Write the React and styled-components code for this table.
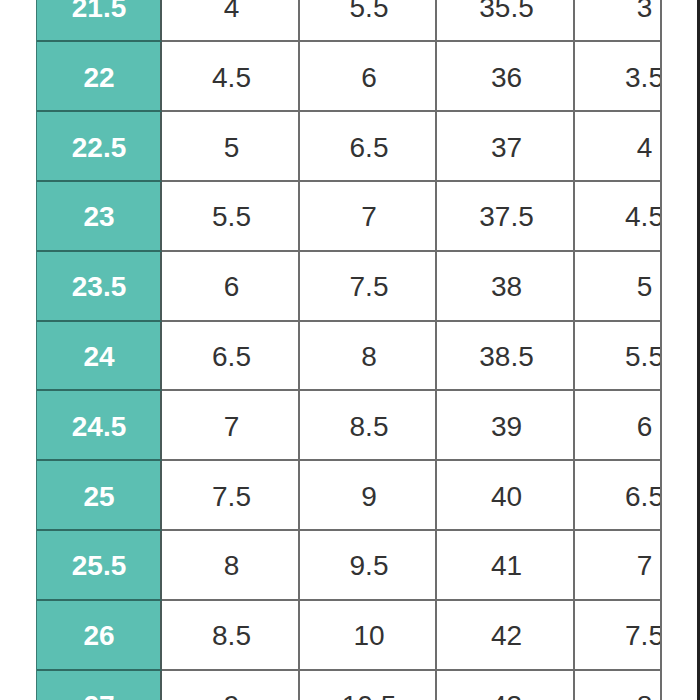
import React from "react";
import styled, { createGlobalStyle } from "styled-components";

const GlobalStyle = createGlobalStyle`
  html, body {
    margin: 0;
    padding: 0;
    background: #ffffff;
  }
  body {
    font-family: "Liberation Sans", Arial, Helvetica, sans-serif;
  }
`;

// the screenshot is a crop of a bigger size chart
const Page = styled.div`
  width: 700px;
  height: 700px;
  overflow: hidden;
  background: #fff;
  display: flex;
  border-right: 3px solid #222;
  box-sizing: border-box;
`;

const Chart = styled.div`
  margin-left: 36px;
  margin-top: -27.4px;
  width: 626px;
  overflow: hidden;
  border-left: 1px solid #3b7a72;
  border-right: 2px solid #6d6d6d;
  box-sizing: border-box;
  align-self: flex-start;
`;

const Row = styled.div`
  display: grid;
  grid-template-columns: 125px 138px 137px 138px 138px;
  height: 69.8px;
`;

const Cell = styled.div`
  display: flex;
  align-items: center;
  justify-content: center;
  box-sizing: border-box;
  padding: 3px 0 0 3px;
  border-bottom: 2px solid #6d6d6d;
  border-right: 2px solid #6d6d6d;
  font-size: 28px;
  color: #333333;
  background: #ffffff;
  white-space: nowrap;
`;

const HeadCell = styled(Cell)`
  padding-left: 1px;
  background: #5cbfb2;
  color: #ffffff;
  font-weight: 700;
  border-bottom-color: #2f6b63;
  border-right-color: #4a5a58;
`;

const rows = [
  ["21.5", "4", "5.5", "35.5", "3"],
  ["22", "4.5", "6", "36", "3.5"],
  ["22.5", "5", "6.5", "37", "4"],
  ["23", "5.5", "7", "37.5", "4.5"],
  ["23.5", "6", "7.5", "38", "5"],
  ["24", "6.5", "8", "38.5", "5.5"],
  ["24.5", "7", "8.5", "39", "6"],
  ["25", "7.5", "9", "40", "6.5"],
  ["25.5", "8", "9.5", "41", "7"],
  ["26", "8.5", "10", "42", "7.5"],
  ["27", "9", "10.5", "43", "8"],
];

export default function App() {
  return (
    <>
      <GlobalStyle />
      <Page>
        <Chart>
          {rows.map((r) => (
            <Row key={r[0]}>
              <HeadCell>{r[0]}</HeadCell>
              {r.slice(1).map((v, i) => (
                <Cell key={i}>{v}</Cell>
              ))}
            </Row>
          ))}
        </Chart>
      </Page>
    </>
  );
}
